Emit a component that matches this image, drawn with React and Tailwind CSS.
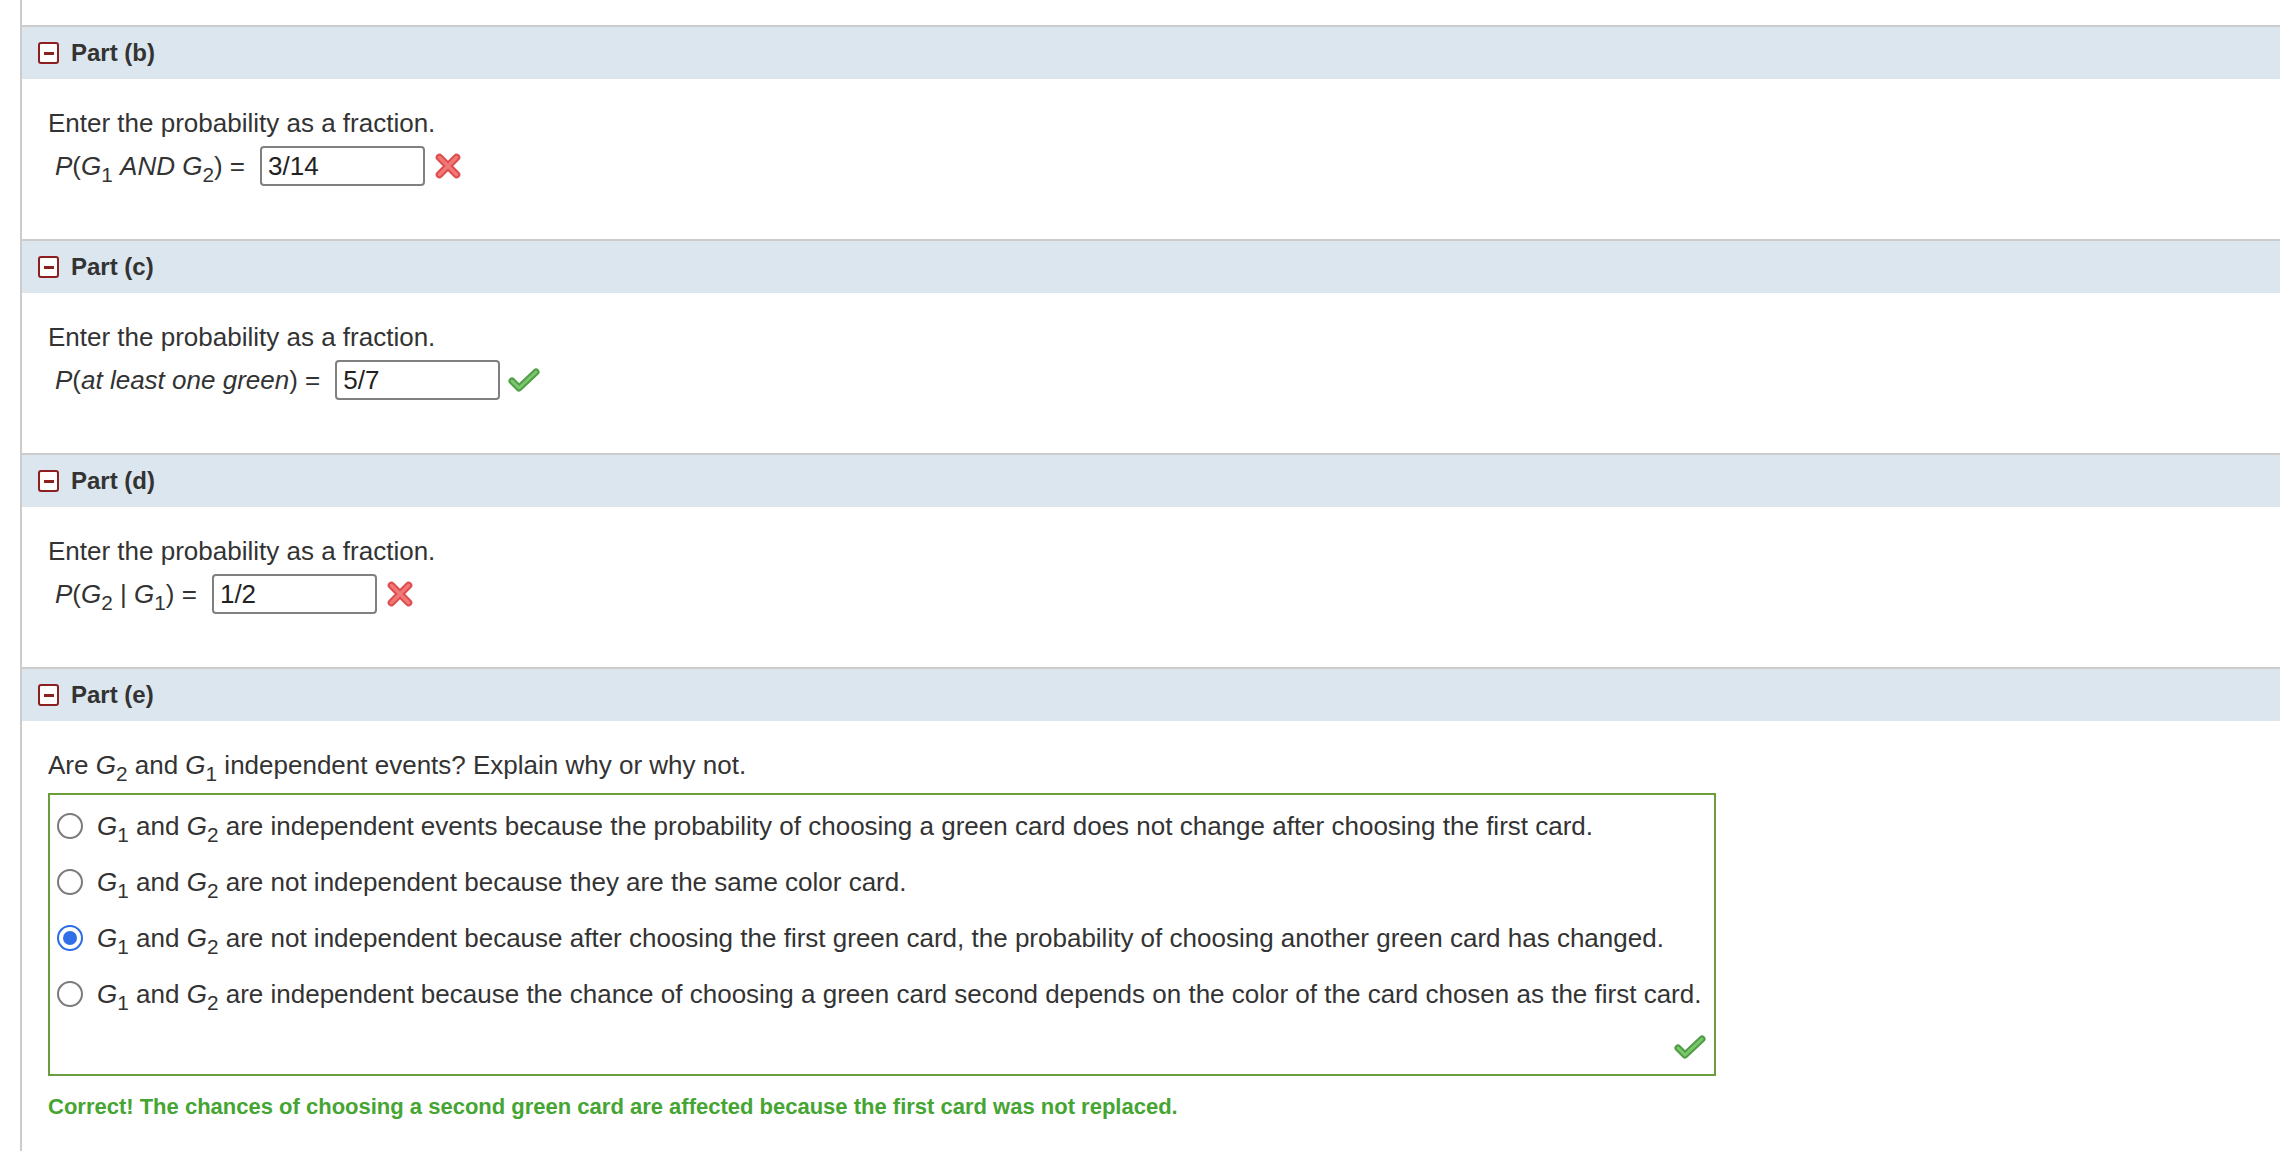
import React from 'react';

const Sub = ({ children }) => (
  <sub className="text-[0.8em] bottom-[-0.35em] not-italic">{children}</sub>
);

const MinusBox = () => (
  <span className="flex h-[22px] w-[21px] items-center justify-center rounded-[3px] border-2 border-[#8c1f1f] bg-white">
    <span className="block h-[3px] w-[10px] bg-[#8c1f1f]" />
  </span>
);

const WrongMark = () => (
  <svg width="30" height="30" viewBox="0 0 28 28" className="shrink-0">
    <path d="M6 6 L22 22 M22 6 L6 22" stroke="#e04e4e" strokeWidth="7" strokeLinecap="round" />
    <path d="M6 6 L22 22 M22 6 L6 22" stroke="#f07a7a" strokeWidth="3" strokeLinecap="round" />
  </svg>
);

const RightMark = () => (
  <svg width="32" height="24" viewBox="0 0 32 24" className="shrink-0">
    <path d="M4 13 L11 20 L28 4" fill="none" stroke="#4f9e45" strokeWidth="7" strokeLinecap="round" strokeLinejoin="round" />
    <path d="M4 13 L11 20 L28 4" fill="none" stroke="#7cc66d" strokeWidth="3" strokeLinecap="round" strokeLinejoin="round" />
  </svg>
);

const PartHeader = ({ label }) => (
  <div className="flex h-[54px] items-center gap-[12px] border-t-2 border-[#cccccc] bg-[#dce6ef] pl-[16px]">
    <MinusBox />
    <span className="text-[24px] font-bold leading-[28px] text-[#333]">{label}</span>
  </div>
);

const FractionPart = ({ label, formula, value, correct }) => (
  <section>
    <PartHeader label={label} />
    <div className="h-[160px] pl-[26px] pt-[29px]">
      <p className="leading-[30px]">Enter the probability as a fraction.</p>
      <div className="ml-[7px] mt-[8px] flex h-[40px] items-center">
        <span className="whitespace-nowrap">{formula}</span>
        <input
          readOnly
          value={value}
          className="ml-[15px] h-[40px] w-[165px] rounded-[4px] border-2 border-[#808080] bg-white px-[6px] text-[26px] text-[#222] outline-none"
        />
        <span className="ml-[8px] flex items-center">{correct ? <RightMark /> : <WrongMark />}</span>
      </div>
    </div>
  </section>
);

const options = [
  'are independent events because the probability of choosing a green card does not change after choosing the first card.',
  'are not independent because they are the same color card.',
  'are not independent because after choosing the first green card, the probability of choosing another green card has changed.',
  'are independent because the chance of choosing a green card second depends on the color of the card chosen as the first card.',
];

const Radio = ({ checked }) =>
  checked ? (
    <span className="flex h-[26px] w-[26px] shrink-0 items-center justify-center rounded-full border-[2.5px] border-[#2a6be6] bg-white">
      <span className="block h-[14px] w-[14px] rounded-full bg-[#2f6fe8]" />
    </span>
  ) : (
    <span className="block h-[26px] w-[26px] shrink-0 rounded-full border-2 border-[#7a7a7a] bg-white" />
  );

export default function App() {
  return (
    <div className="min-h-screen bg-white font-['Liberation_Sans',Arial,sans-serif] text-[26px] text-[#333]">
      <div className="ml-[20px] min-h-[1151px] border-l-2 border-[#cccccc] pt-[25px]">
        <FractionPart
          label="Part (b)"
          value="3/14"
          formula={
            <>
              <i>P</i>(<i>G</i><Sub>1</Sub> <i>AND G</i><Sub>2</Sub>) =
            </>
          }
        />
        <FractionPart
          label="Part (c)"
          value="5/7"
          correct
          formula={
            <>
              <i>P</i>(<i>at least one green</i>) =
            </>
          }
        />
        <FractionPart
          label="Part (d)"
          value="1/2"
          formula={
            <>
              <i>P</i>(<i>G</i><Sub>2</Sub> | <i>G</i><Sub>1</Sub>) =
            </>
          }
        />

        <section>
          <PartHeader label="Part (e)" />
          <div className="pl-[26px] pt-[29px]">
            <p className="leading-[30px]">
              Are <i>G</i><Sub>2</Sub> and <i>G</i><Sub>1</Sub> independent events? Explain why or why not.
            </p>
            <div className="mt-[13px] h-[283px] w-[1668px] border-2 border-[#6b9c3e] pt-[3px]">
              {options.map((text, i) => (
                <div key={i} className="flex h-[56px] items-center pl-[7px]">
                  <Radio checked={i === 2} />
                  <span className="ml-[14px] whitespace-nowrap">
                    <i>G</i><Sub>1</Sub> and <i>G</i><Sub>2</Sub> {text}
                  </span>
                </div>
              ))}
              <div className="mt-[13px] flex justify-end pr-[8px]">
                <RightMark />
              </div>
            </div>
            <p className="mt-[19px] text-[22px] font-bold leading-[24px] text-[#45a532]">
              Correct! The chances of choosing a second green card are affected because the first card was not replaced.
            </p>
          </div>
        </section>
      </div>
    </div>
  );
}
